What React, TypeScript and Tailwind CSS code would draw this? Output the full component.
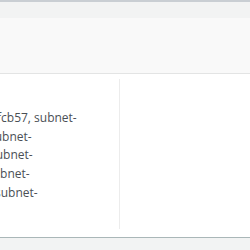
const lines = [
  { text: 'fcb57, subnet-', shift: 'ml-[-3px]' },
  { text: 'subnet-', shift: 'ml-[-11px]' },
  { text: 'subnet-', shift: 'ml-[-10px]' },
  { text: 'subnet-', shift: 'ml-[-13px]' },
  { text: 'subnet-', shift: 'ml-[-5px]' },
]

export default function App() {
  return (
    <div className="flex h-[250px] w-[250px] flex-col overflow-hidden bg-white font-['Open_Sans',sans-serif]">
      <div className="h-[2px] bg-[#c9ced3]" />
      <div className="h-[16px] bg-[#f2f3f3]" />
      <div className="h-[56px] border-b border-[#e3e4e4] bg-[#f9f9f9]" />
      <div className="flex flex-1 pt-[5px] pb-[8px]">
        <div className="w-[120px] overflow-hidden border-r border-[#ececec] pt-[30px]">
          {lines.map((line, i) => (
            <div
              key={i}
              className={`${line.shift} whitespace-nowrap text-[12px] leading-[18.7px] text-[#4a4f55]`}
            >
              {line.text}
            </div>
          ))}
        </div>
        <div className="flex-1" />
      </div>
      <div className="h-[1px] bg-[#aab7b8]" />
      <div className="h-[12px] bg-[#f2f3f3]" />
    </div>
  )
}
